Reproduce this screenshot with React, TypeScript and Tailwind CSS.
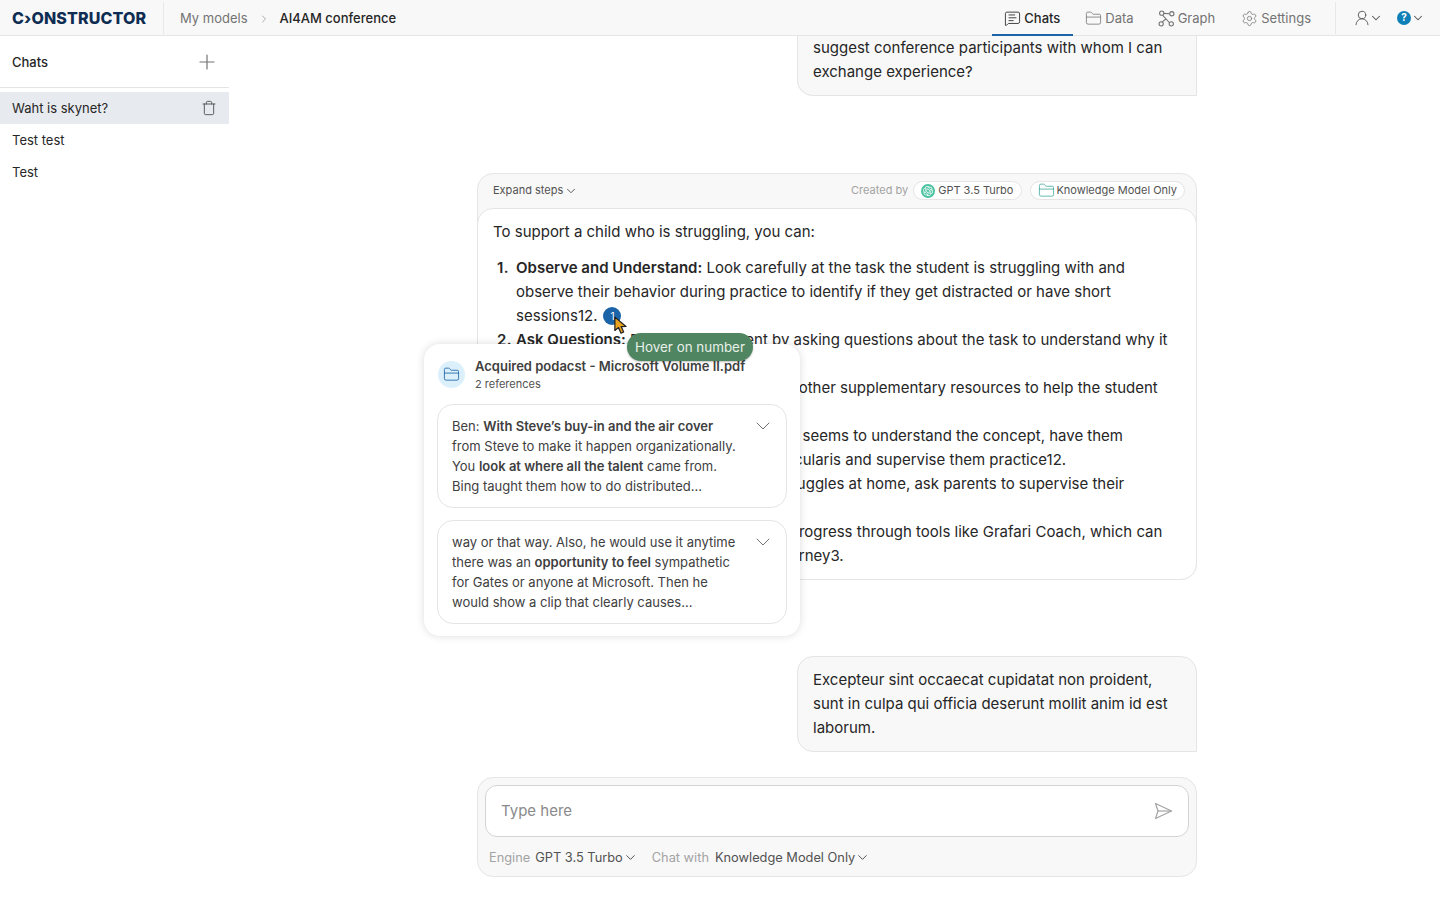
import { ChevronDown, ChevronRight, FolderClosed, MessageSquareText, Plus, Settings, Trash, UserRound } from "lucide-react";
import { SiOpenai } from "react-icons/si";

function GraphIcon() {
  return (
    <svg width="17" height="17" viewBox="0 0 16 16" fill="none" stroke="currentColor" strokeWidth="1">
      <circle cx="3.5" cy="3" r="2" />
      <circle cx="13" cy="3.5" r="2" />
      <circle cx="3" cy="13" r="2" />
      <circle cx="12.5" cy="13" r="2" />
      <path d="M4.5 5 L10.8 12 M5.5 3.2 L11 3.5 M4 11.2 L7.5 8.5" />
    </svg>
  );
}

function SendIcon() {
  return (
    <svg width="20" height="20" viewBox="0 0 20 20" fill="none" stroke="#a3a3a3" strokeWidth="1.2" strokeLinejoin="round">
      <path d="M2.5 2.5 L18.5 10 L2.5 17.5 L5 10 Z" />
      <path d="M5 10 H18.5" />
    </svg>
  );
}

function CursorIcon() {
  return (
    <svg width="16" height="20" viewBox="0 0 14 18">
      <path d="M1.5 1 L1.5 13 L4.8 10.4 L7 15.5 L9.4 14.4 L7.2 9.6 L11.5 9.4 Z" fill="#e9a21f" stroke="#1f1f1f" strokeWidth="1.1" strokeLinejoin="round" />
    </svg>
  );
}

function NavTab({ label, active, icon, className }: { label: string; active?: boolean; icon: React.ReactNode; className?: string }) {
  const colorClassName = active ? "border-[#1c64a8] text-[#262626] font-medium" : "border-transparent text-[#737373]";

  return (
    <div className={`flex h-9 items-center gap-[3px] border-b-2 pl-3 pt-[3px] text-[13px] ${colorClassName} ${className ?? "pr-3"}`}>
      {icon}
      <span className="pt-px">{label}</span>
    </div>
  );
}

function Header() {
  return (
    <header className="flex h-9 shrink-0 items-center border-b border-[#e5e5e5] bg-[#f8f8f8]">
      <div className="flex h-8 w-[164px] items-center border-r border-[#e8e8e8] pl-3 pt-px text-[16px] font-extrabold tracking-[0.15px] text-[#0f2d52]">
        C›ONSTRUCTOR
      </div>
      <div className="ml-4 flex items-center pt-0.5 text-[13px]">
        <span className="text-[#737373]">My models</span>
        <ChevronRight className="mx-[10px] text-[#8a8a8a]" size={12} strokeWidth={1.4} />
        <span className="font-medium text-[#262626]">AI4AM conference</span>
      </div>
      <div className="ml-auto flex items-center">
        <NavTab label="Chats" active className="pr-[13px]" icon={<MessageSquareText size={17} strokeWidth={1.2} />} />
        <NavTab label="Data" icon={<FolderClosed size={17} strokeWidth={1.1} />} />
        <NavTab label="Graph" className="pr-[14px]" icon={<GraphIcon />} />
        <NavTab label="Settings" icon={<Settings size={17} strokeWidth={1.1} />} />
        <div className="ml-3 flex h-8 items-center gap-[14px] border-l border-[#e8e8e8] pl-[17px] pr-[15px] text-[#525252]">
          <div className="flex items-center">
            <UserRound size={18} strokeWidth={1.2} />
            <ChevronDown className="-ml-[2px]" size={14} strokeWidth={1.8} />
          </div>
          <div className="flex items-center">
            <div className="flex h-[14px] w-[14px] items-center justify-center rounded-full bg-[#0f7fb8] text-[10px] font-bold text-white">?</div>
            <ChevronDown size={14} strokeWidth={1.8} />
          </div>
        </div>
      </div>
    </header>
  );
}

function Sidebar() {
  return (
    <aside className="w-[229px] shrink-0 text-[13px] text-[#262626]">
      <div className="flex h-[52px] items-center justify-between border-b border-[#e5e5e5] pl-3 pr-[10px]">
        <span className="pt-0.5 font-medium">Chats</span>
        <Plus className="text-[#737373]" size={24} strokeWidth={1.2} />
      </div>
      <div className="mt-1">
        <div className="flex h-8 items-center justify-between bg-[#e7eaef] pl-3 pr-3">
          <span className="pt-0.5">Waht is skynet?</span>
          <Trash className="text-[#525252]" size={16} strokeWidth={1.4} />
        </div>
        <div className="flex h-8 items-center pl-3 pt-0.5">Test test</div>
        <div className="flex h-8 items-center pl-3 pt-0.5">Test</div>
      </div>
    </aside>
  );
}

function UserBubble({ children, className }: { children: React.ReactNode; className?: string }) {
  return (
    <div className={`ml-auto w-[400px] rounded-2xl rounded-br-none border border-[#e5e5e5] bg-[#f8f8f8] px-[15px] pb-[11px] text-[15px] leading-6 text-[#262626] ${className ?? ""}`}>
      {children}
    </div>
  );
}

function ListItem({ number, children }: { number: number; children: React.ReactNode }) {
  return (
    <li className="flex">
      <span className="w-[23px] shrink-0 pl-1 font-semibold tracking-wide">{number}.</span>
      <div>{children}</div>
    </li>
  );
}

function SourceCard({ children }: { children: React.ReactNode }) {
  return (
    <div className="relative rounded-2xl border border-[#e5e5e5] bg-white px-[14px] py-[11px] text-[13px] leading-5 text-[#404040]">
      {children}
      <ChevronDown className="absolute right-[11px] top-[9px] text-[#737373]" size={24} strokeWidth={1} />
    </div>
  );
}

function SourcePopover() {
  return (
    <div className="absolute left-[-54px] top-[170px] z-10 w-[376px] rounded-2xl bg-white px-[13px] py-3 shadow-[0_0_8px_rgba(0,0,0,0.14)]">
      <div className="flex items-center gap-[10px] pl-px">
        <div className="flex h-[27px] w-[27px] items-center justify-center rounded-full bg-[#dcf0fb] text-[#1c64a8]">
          <FolderClosed size={17} strokeWidth={1.2} />
        </div>
        <div>
          <div className="text-[13px] font-semibold leading-5 text-[#404040]">Acquired podacst - Microsoft Volume II.pdf</div>
          <div className="text-[11px] leading-4 text-[#525252]">2 references</div>
        </div>
      </div>
      <div className="mt-3 flex flex-col gap-3">
        <SourceCard>
          Ben: <b className="font-semibold">With Steve’s buy-in and the air cover</b>
          <br />
          from Steve to make it happen organizationally.
          <br />
          You <b className="font-semibold">look at where all the talent</b> came from.
          <br />
          Bing taught them how to do distributed...
        </SourceCard>
        <SourceCard>
          way or that way. Also, he would use it anytime
          <br />
          there was an <b className="font-semibold">opportunity to feel</b> sympathetic
          <br />
          for Gates or anyone at Microsoft. Then he
          <br />
          would show a clip that clearly causes...
        </SourceCard>
      </div>
    </div>
  );
}

function AnswerCard() {
  return (
    <div className="relative mt-[77px] rounded-2xl border border-[#e5e5e5] bg-[#f8f8f8]">
      <div className="flex h-[34px] items-center px-[15px] pb-px text-[11px] text-[#525252]">
        <span className="flex items-center gap-px">
          Expand steps <ChevronDown size={14} strokeWidth={1.6} />
        </span>
        <span className="ml-auto text-[#a3a3a3]">Created by</span>
        <span className="ml-[5px] flex h-[19px] items-center gap-[3px] rounded-full border border-[#e5e5e5] bg-white pl-[7px] pr-2">
          <span className="flex h-[14px] w-[14px] items-center justify-center rounded-full bg-[#4cc3a1] text-white">
            <SiOpenai size={10} />
          </span>
          GPT 3.5 Turbo
        </span>
        <span className="ml-2 mr-[-4px] flex h-[19px] items-center gap-px rounded-full border border-[#e5e5e5] bg-white pl-[7px] pr-[7px]">
          <FolderClosed className="text-[#2a9d8f]" size={17} strokeWidth={1} />
          Knowledge Model Only
        </span>
      </div>
      <div className="-mx-px -mb-px rounded-2xl border border-[#e5e5e5] bg-white px-[15px] pb-[11px] pt-[11px] text-[15px] leading-6 text-[#262626]">
        <p>To support a child who is struggling, you can:</p>
        <ol className="mt-3">
          <ListItem number={1}>
            <b className="font-semibold">Observe and Understand:</b> Look carefully at the task the student is struggling with and observe their behavior during practice to identify if they get distracted or have short sessions12.
            <span className="relative ml-[6px] inline-flex h-[18px] w-[18px] items-center justify-center rounded-full bg-[#1c64a8] align-[1px] text-[10px] leading-none text-white">
              1
              <span className="absolute left-[10px] top-[9px] z-30 flex">
                <CursorIcon />
              </span>
            </span>
          </ListItem>
          <ListItem number={2}>
            <b className="font-semibold">Ask Questions:</b> Engage the student by asking questions about the task to understand why it is difficult.
          </ListItem>
          <ListItem number={3}>
            <b className="font-semibold">Provide Resources:</b> Offer e-guides and other supplementary resources to help the student with the topic.
          </ListItem>
          <ListItem number={4}>
            <b className="font-semibold">Supervise Practice:</b> If the student really seems to understand the concept, have them practice inside the classroom with particularis and supervise them practice12.
            <br />
            If the task is hard and so the student struggles at home, ask parents to supervise their practice.
          </ListItem>
          <ListItem number={5}>
            <b className="font-semibold">Track Progress:</b> Monitor the student's progress through tools like Grafari Coach, which can guide the student over their learning journey3.
          </ListItem>
        </ol>
      </div>
      <SourcePopover />
      <div className="absolute left-[149px] top-[159px] z-20 flex h-7 w-[126px] items-center justify-center rounded-full bg-[#4f8560] pt-px text-[13.4px] text-[#e8f0ea] shadow-[0_1px_2px_rgba(0,0,0,0.25)]">
        Hover on number
      </div>
    </div>
  );
}

function ChatInput() {
  return (
    <div className="mt-[25px] h-[100px] rounded-2xl border border-[#e5e5e5] bg-[#f8f8f8] p-[7px]">
      <div className="flex h-[52px] items-center justify-between rounded-xl border border-[#d4d4d4] bg-white pl-[15px] pr-[15px]">
        <input className="flex-1 text-[15px] outline-none placeholder:text-[#8a8a8a]" placeholder="Type here" />
        <SendIcon />
      </div>
      <div className="mt-[11px] flex items-center pl-1 text-[12.8px] text-[#a3a3a3]">
        <span>Engine</span>
        <span className="ml-[5px] flex items-center text-[#525252]">
          GPT 3.5 Turbo <ChevronDown size={15} strokeWidth={1.6} />
        </span>
        <span className="ml-[14px]">Chat with</span>
        <span className="ml-[6px] flex items-center text-[#525252]">
          Knowledge Model Only <ChevronDown size={15} strokeWidth={1.6} />
        </span>
      </div>
    </div>
  );
}

export default function App() {
  return (
    <div className="flex h-screen flex-col overflow-hidden bg-white font-[Inter,sans-serif]">
      <Header />
      <div className="flex min-h-0 flex-1">
        <Sidebar />
        <main className="ml-[248px] w-[720px]">
          <UserBubble className="rounded-t-none border-t-0">
            suggest conference participants with whom I can
            <br />
            exchange experience?
          </UserBubble>
          <AnswerCard />
          <UserBubble className="mt-[76px] pt-[11px]">
            Excepteur sint occaecat cupidatat non proident, sunt in culpa qui officia deserunt mollit anim id est laborum.
          </UserBubble>
          <ChatInput />
        </main>
      </div>
    </div>
  );
}
